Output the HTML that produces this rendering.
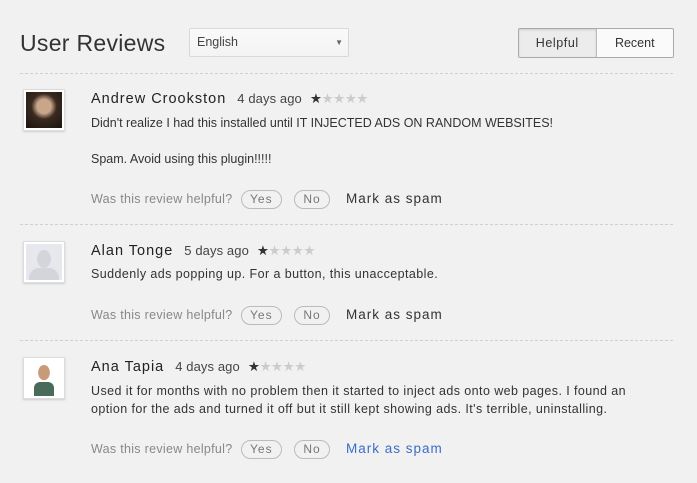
<!DOCTYPE html><html><head><style>
body{margin:0;width:697px;height:483px;background:#f1f1f1;font-family:"Liberation Sans",sans-serif;color:#333;position:relative;overflow:hidden}
.a{position:absolute;white-space:nowrap}
.h{font-size:23px;color:#333;left:20px;top:30px;letter-spacing:.3px}
.sel{left:189px;top:28px;width:160px;height:29px;border:1px solid #d8d8d8;border-radius:2px;background:linear-gradient(#fafafa,#f3f3f3);box-sizing:border-box;font-size:12.5px;line-height:27px;padding-left:7px;color:#444}
.tg{left:518px;top:28px;width:156px;height:30px;border:1px solid #aaa;border-radius:2px;box-sizing:border-box;display:flex;font-size:12.5px;background:#fafafa}
.tg div{flex:1;text-align:center;line-height:28px}
.tg div:first-child{background:#ececec;border-right:1px solid #bbb;letter-spacing:.6px;box-shadow:inset 0 1px 2px #ccc}
.sep{left:20px;width:653px;border-top:1px dashed #d0d0d0;height:0}
.av{left:23px;width:42px;height:42px;border:1px solid #ddd;background:#fff;box-sizing:border-box;padding:2px;box-shadow:0 1px 2px #ccc}
.nm{font-size:14.5px;letter-spacing:1px;color:#222}
.dt{font-size:13px;color:#444;letter-spacing:.1px;margin-left:11px}
.st{font-size:13.5px;color:#ccc;letter-spacing:-.5px;margin-left:8px}
.st b{color:#333;font-weight:normal}
.tx{font-size:12.5px;color:#333}
.w{letter-spacing:.42px}
.hl{font-size:12.5px;color:#888;left:91px;letter-spacing:.3px}
.pill{display:inline-block;border:1px solid #bbb;border-radius:10px;padding:0 8.5px;line-height:17px;color:#777;letter-spacing:1px;margin-left:8px;font-size:12px}
.sp{font-size:13.5px;color:#333;letter-spacing:1px;margin-left:12px}
</style></head><body>
<div class="a h">User Reviews</div>
<div class="a sel">English<span style="position:absolute;right:5px;top:0;font-size:8px;color:#666">▼</span></div>
<div class="a tg"><div>Helpful</div><div>Recent</div></div>
<div class="a sep" style="top:73px"></div>

<div class="a av" style="top:89px"><div style="width:100%;height:100%;background:radial-gradient(circle at 50% 40%,#c9a58a 0 25%,#3a2a20 45%,#1a1410 100%)"></div></div>
<div class="a" style="left:91px;top:90px"><span class="nm">Andrew Crookston</span><span class="dt">4 days ago</span><span class="st"><b>★</b>★★★★</span></div>
<div class="a tx" style="left:91px;top:116px">Didn't realize I had this installed until IT INJECTED ADS ON RANDOM WEBSITES!</div>
<div class="a tx" style="left:91px;top:152px">Spam. Avoid using this plugin!!!!!</div>
<div class="a hl" style="top:190px">Was this review helpful?<span class="pill">Yes</span> <span class="pill">No</span> <span class="sp">Mark as spam</span></div>
<div class="a sep" style="top:224px"></div>

<div class="a av" style="top:241px"><div style="width:100%;height:100%;background:#e6e8ee;position:relative;overflow:hidden"><div style="position:absolute;left:11px;top:6px;width:14px;height:18px;border-radius:50%;background:#d3d5db"></div><div style="position:absolute;left:3px;top:24px;width:30px;height:20px;border-radius:10px 10px 0 0;background:#d3d5db"></div></div></div>
<div class="a" style="left:91px;top:242px"><span class="nm">Alan Tonge</span><span class="dt">5 days ago</span><span class="st"><b>★</b>★★★★</span></div>
<div class="a tx w" style="left:91px;top:267px">Suddenly ads popping up. For a button, this unacceptable.</div>
<div class="a hl" style="top:306px">Was this review helpful?<span class="pill">Yes</span> <span class="pill">No</span> <span class="sp">Mark as spam</span></div>
<div class="a sep" style="top:340px"></div>

<div class="a av" style="top:357px"><div style="width:100%;height:100%;background:radial-gradient(ellipse at 50% 35%,#c89a7a 0 22%,#fff 24%),#fff;position:relative"><div style="position:absolute;left:8px;top:22px;width:20px;height:14px;background:#4a6a5a;border-radius:6px 6px 0 0"></div></div></div>
<div class="a" style="left:91px;top:358px"><span class="nm">Ana Tapia</span><span class="dt">4 days ago</span><span class="st"><b>★</b>★★★★</span></div>
<div class="a tx w" style="left:91px;top:384px">Used it for months with no problem then it started to inject ads onto web pages. I found an</div>
<div class="a tx w" style="left:91px;top:402px">option for the ads and turned it off but it still kept showing ads. It's terrible, uninstalling.</div>
<div class="a hl" style="top:440px">Was this review helpful?<span class="pill">Yes</span> <span class="pill">No</span> <span class="sp" style="color:#3a6ec8">Mark as spam</span></div>
</body></html>
